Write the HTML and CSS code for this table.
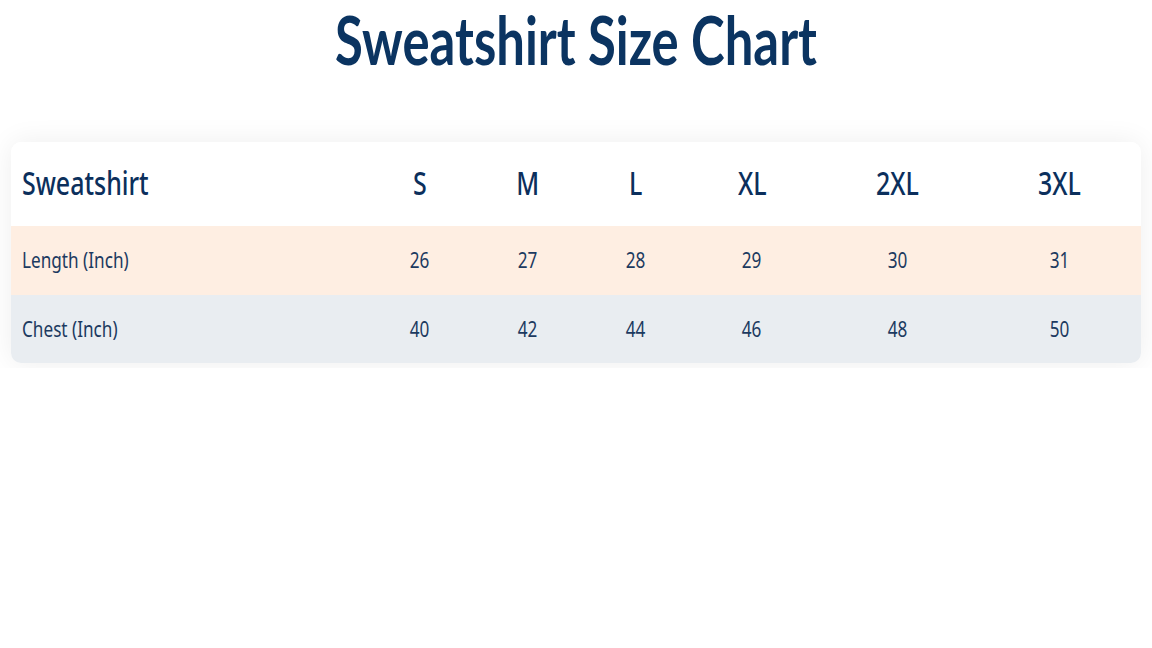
FILE: index.html
```html
<!DOCTYPE html>
<html lang="en">
<head>
<meta charset="utf-8">
<title>Sweatshirt Size Chart</title>
<link rel="stylesheet" href="styles.css">
</head>
<body>
<main class="page">
  <h1 class="title"><span class="narrow">Sweatshirt Size Chart</span></h1>
  <div class="card-wrap">
    <div class="card">
      <div class="row head">
        <div class="cell label"><span class="narrow">Sweatshirt</span></div>
        <div class="cell"><span class="narrow">S</span></div>
        <div class="cell"><span class="narrow">M</span></div>
        <div class="cell"><span class="narrow">L</span></div>
        <div class="cell"><span class="narrow">XL</span></div>
        <div class="cell"><span class="narrow">2XL</span></div>
        <div class="cell"><span class="narrow">3XL</span></div>
      </div>
      <div class="row length">
        <div class="cell label"><span class="narrow">Length (Inch)</span></div>
        <div class="cell"><span class="narrow">26</span></div>
        <div class="cell"><span class="narrow">27</span></div>
        <div class="cell"><span class="narrow">28</span></div>
        <div class="cell"><span class="narrow">29</span></div>
        <div class="cell"><span class="narrow">30</span></div>
        <div class="cell"><span class="narrow">31</span></div>
      </div>
      <div class="row chest">
        <div class="cell label"><span class="narrow">Chest (Inch)</span></div>
        <div class="cell"><span class="narrow">40</span></div>
        <div class="cell"><span class="narrow">42</span></div>
        <div class="cell"><span class="narrow">44</span></div>
        <div class="cell"><span class="narrow">46</span></div>
        <div class="cell"><span class="narrow">48</span></div>
        <div class="cell"><span class="narrow">50</span></div>
      </div>
    </div>
  </div>
</main>
</body>
</html>
```

FILE: styles.css
```css
html, body {
  margin: 0;
  padding: 0;
  background: #ffffff;
}

body {
  font-family: "Noto Sans", "DejaVu Sans", sans-serif;
  color: #0b3160;
}

.page {
  width: 1152px;
  height: 648px;
}

.narrow {
  display: inline-block;
  transform: scaleX(0.78);
  transform-origin: center;
}

.title {
  margin: 0;
  text-align: center;
  font-family: Lato, "Noto Sans", sans-serif;
  font-size: 66px;
  line-height: normal;
  font-weight: 700;
  color: #0b3461;
}

.title .narrow {
  transform: scaleX(0.77);
}

.card-wrap {
  padding: 63px 11px 5px 11px;
  overflow: hidden;
}

.card {
  background: #ffffff;
  border-radius: 10px;
  overflow: hidden;
  box-shadow: 0 0 28px rgba(0, 0, 0, 0.07);
}

.row {
  display: grid;
  grid-template-columns: 357fr 102fr 112fr 104fr 128fr 162fr 162fr;
  align-items: center;
  box-sizing: border-box;
  padding-bottom: 3px;
}

.cell {
  text-align: center;
}

.cell.label {
  text-align: left;
  padding-left: 11px;
}

.cell.label .narrow {
  transform-origin: left center;
}

.head {
  height: 84px;
  background: #ffffff;
  font-size: 32px;
  font-weight: 500;
  color: #0b2f5c;
}

.length {
  height: 69px;
  background: #feeee2;
  font-size: 22px;
  color: #1c3a60;
}

.chest {
  height: 68px;
  background: #e9edf1;
  font-size: 22px;
  color: #1c3a60;
}
```
